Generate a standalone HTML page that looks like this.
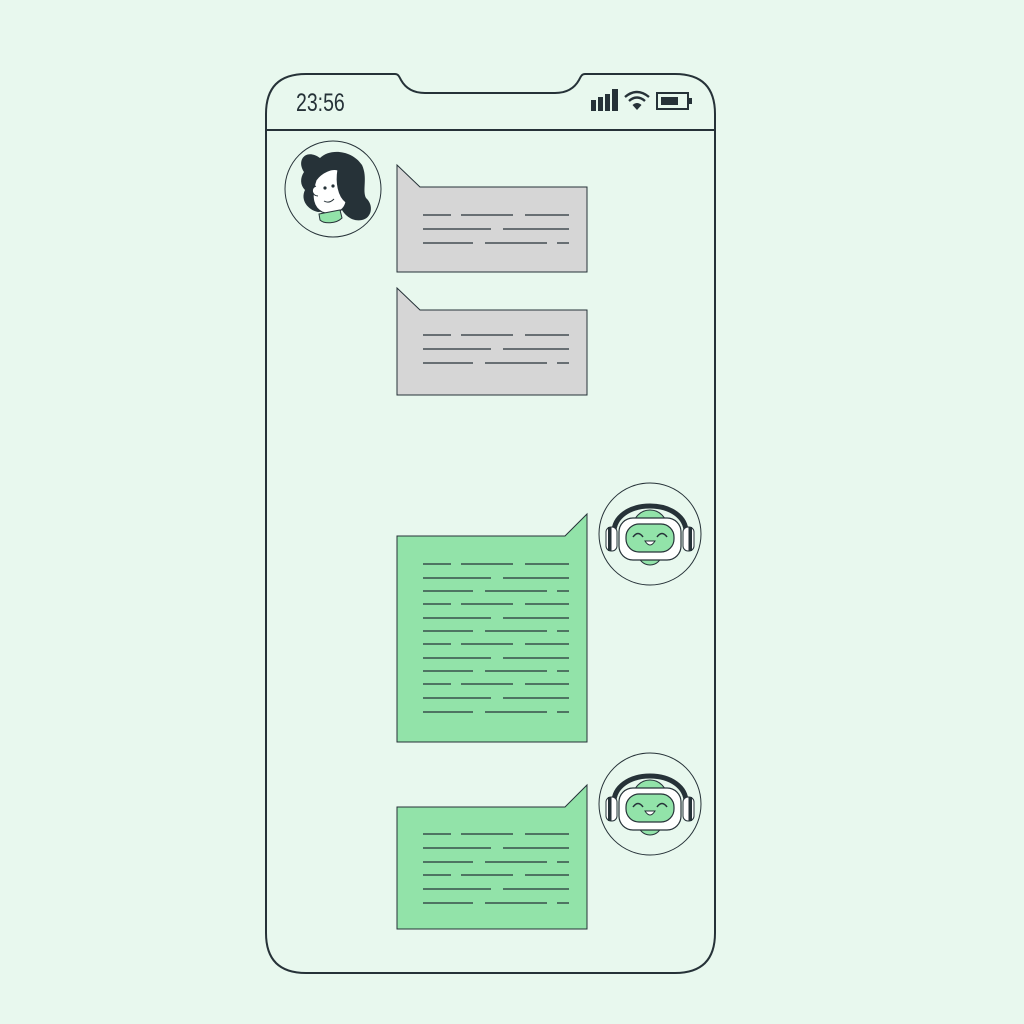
<!DOCTYPE html><html><head><style>body{margin:0;background:#e8f8ee}svg{display:block}</style></head><body>
<svg width="1024" height="1024" viewBox="0 0 1024 1024" xmlns="http://www.w3.org/2000/svg">
<defs>
<path id="A" d="M423 0 H451 M461 0 H513 M525 0 H569"/>
<path id="B" d="M423 0 H491 M503 0 H569"/>
<path id="C" d="M423 0 H473 M485 0 H547 M557 0 H569"/>
</defs>
<rect width="1024" height="1024" fill="#e8f8ee"/>
<path d="M306 74 H395 C398 74 399 76 401 80 C406 89 414 93 425 93 H555 C566 93 574 89 579 80 C581 76 582 74 585 74 H675 Q715 74 715 114 V933 Q715 973 675 973 H306 Q266 973 266 933 V114 Q266 74 306 74 Z" fill="#e8f8ee" stroke="#263238" stroke-width="2"/>
<line x1="266" y1="130" x2="715" y2="130" stroke="#263238" stroke-width="2"/>
<text x="0" y="0" font-family="Liberation Sans, sans-serif" font-size="25" fill="#263238" transform="translate(296,111) scale(0.78,1)">23:56</text>
<g fill="#263238"><rect x="591" y="100" width="5" height="11"/><rect x="598" y="97" width="5" height="14"/><rect x="605" y="94" width="5" height="17"/><rect x="612" y="89" width="6" height="22"/></g>
<g fill="none" stroke="#263238" stroke-width="2.4"><path d="M625 97 Q637 87 649 97"/><path d="M629 101 Q637 94 645 101"/></g>
<path d="M632.5 105 L637 110 L641.5 105 Q637 101 632.5 105 Z" fill="#263238"/>
<rect x="657" y="93" width="31" height="16" fill="none" stroke="#263238" stroke-width="2"/><rect x="661" y="97" width="17" height="8" fill="#263238"/><rect x="689" y="98" width="3" height="6" fill="#263238"/>
<!-- avatar woman -->
<circle cx="333" cy="189" r="48" fill="#e8f8ee" stroke="#263238" stroke-width="1"/>
<path d="M304 172 C296 160 306 148 320 158 C330 148 352 150 362 165 C368 178 362 190 366 198 C374 205 372 218 362 220 C352 222 345 215 342 210 L318 212 C308 210 300 200 305 190 C300 185 300 178 304 172 Z" fill="#263238"/>
<path d="M316 180 C322 172 332 168 338 170 C336 182 338 196 346 202 C344 212 332 216 322 212 C314 208 310 198 316 180 Z" fill="#fff" stroke="#263238" stroke-width="1.2"/>
<path d="M316 186 C310 188 312 196 318 196" fill="#fff" stroke="#263238" stroke-width="1"/>
<path d="M319 214 L340 210 L342 218 C336 224 324 224 320 220 Z" fill="#92e3a9" stroke="#263238" stroke-width="1"/>
<g fill="#263238"><circle cx="325" cy="188" r="1.6"/><circle cx="333" cy="186" r="1.6"/></g>
<path d="M324 201 Q329 204 334 199" fill="none" stroke="#263238" stroke-width="1"/>
<!-- bubbles -->
<g stroke="#263238" stroke-width="1">
<path d="M397 165 L420 187 H587 V272 H397 Z" fill="#d6d6d6"/>
<path d="M397 288 L420 310 H587 V395 H397 Z" fill="#d6d6d6"/>
<path d="M397 536 H565 L587 514 V742 H397 Z" fill="#92e3a9"/>
<path d="M397 807 H565 L587 785 V929 H397 Z" fill="#92e3a9"/>
</g>
<g stroke="#263238" stroke-width="1.3">
<use href="#A" y="215"/><use href="#B" y="229"/><use href="#C" y="243"/>
<use href="#A" y="335"/><use href="#B" y="349"/><use href="#C" y="363"/>
<use href="#A" y="564"/><use href="#B" y="578"/><use href="#C" y="591"/><use href="#A" y="604"/><use href="#B" y="618"/><use href="#C" y="631"/><use href="#A" y="644"/><use href="#B" y="658"/><use href="#C" y="671"/><use href="#A" y="684"/><use href="#B" y="698"/><use href="#C" y="712"/>
<use href="#A" y="834"/><use href="#B" y="848"/><use href="#C" y="862"/><use href="#A" y="875"/><use href="#B" y="889"/><use href="#C" y="903"/>
</g>
<!-- robots -->
<g id="robot">
<circle cx="650" cy="534" r="51" fill="#e8f8ee" stroke="#263238" stroke-width="1"/>
<path d="M614 536 C610 496 690 496 686 536" fill="none" stroke="#263238" stroke-width="5"/>
<circle cx="650" cy="527" r="17" fill="#92e3a9" stroke="#263238" stroke-width="1"/>
<circle cx="650" cy="553" r="12" fill="#92e3a9" stroke="#263238" stroke-width="1"/>
<rect x="619" y="518" width="62" height="42" rx="14" fill="#fff" stroke="#263238" stroke-width="1.2"/>
<rect x="626" y="524" width="48" height="28" rx="13" fill="#92e3a9" stroke="#263238" stroke-width="1.2"/>
<rect x="606" y="527" width="11" height="24" rx="5" fill="#fff" stroke="#263238"/><rect x="608" y="527" width="3.5" height="24" fill="#263238"/>
<rect x="683" y="527" width="11" height="24" rx="5" fill="#fff" stroke="#263238"/><rect x="688.5" y="527" width="3.5" height="24" fill="#263238"/>
<g fill="none" stroke="#263238" stroke-width="1.5"><path d="M633 537 Q638 530 643 537"/><path d="M657 537 Q662 530 667 537"/></g>
<path d="M645 541 H655 Q650 549 645 541 Z" fill="#fff" stroke="#263238"/>
</g>
<use href="#robot" y="270"/>
</svg></body></html>
